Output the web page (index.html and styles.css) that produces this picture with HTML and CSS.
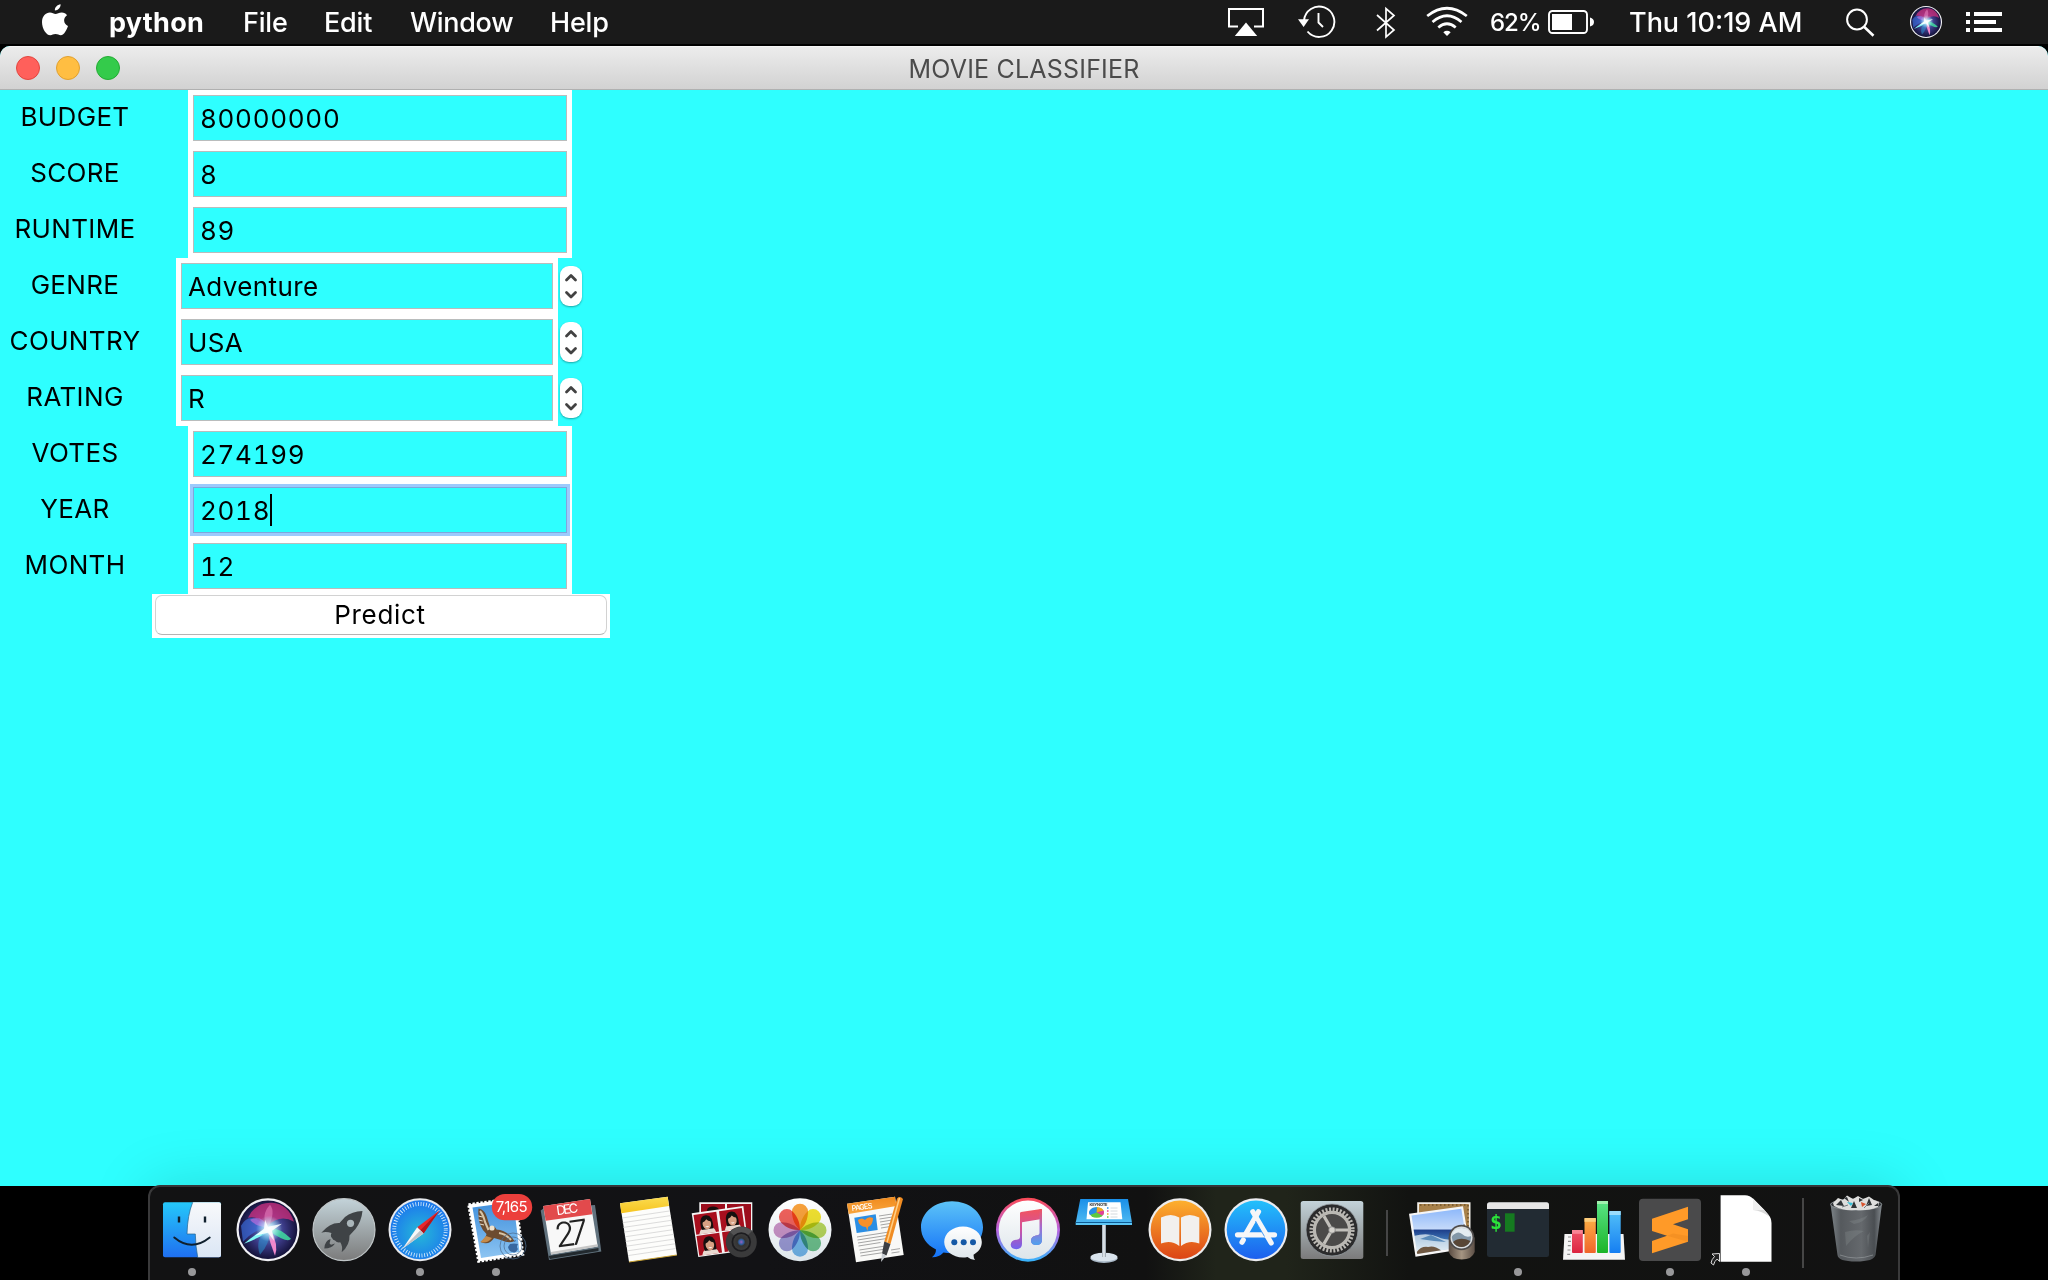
FILE: index.html
```html
<!DOCTYPE html>
<html lang="en">
<head>
<meta charset="utf-8">
<title>Movie Classifier</title>
<link rel="stylesheet" href="styles.css">
</head>
<body>
<svg class="defs" width="0" height="0" aria-hidden="true">
  <defs>
    <linearGradient id="gFinder" x1="0" y1="0" x2="0" y2="1"><stop offset="0" stop-color="#25c8fa"/><stop offset="1" stop-color="#1f6ff0"/></linearGradient>
    <linearGradient id="gFace" x1="0" y1="0" x2="0" y2="1"><stop offset="0" stop-color="#f8f9fb"/><stop offset="1" stop-color="#dbe6f5"/></linearGradient>
    <radialGradient id="gSiri" cx=".5" cy=".5" r=".5"><stop offset="0" stop-color="#6f9ae0"/><stop offset=".55" stop-color="#3b3a86"/><stop offset="1" stop-color="#14123a"/></radialGradient>
    <radialGradient id="gGlow" cx=".5" cy=".5" r=".5"><stop offset="0" stop-color="#fff"/><stop offset=".35" stop-color="#d4fbff" stop-opacity=".75"/><stop offset="1" stop-color="#a8e8ff" stop-opacity="0"/></radialGradient>
    <linearGradient id="gGrey" x1="0" y1="0" x2="0" y2="1"><stop offset="0" stop-color="#c3d3d9"/><stop offset="1" stop-color="#7b7b7b"/></linearGradient>
    <radialGradient id="gSafari" cx=".5" cy=".55" r=".5"><stop offset="0" stop-color="#25b9d8"/><stop offset="1" stop-color="#1d7bec"/></radialGradient>
    <linearGradient id="gSky" x1="0" y1="0" x2="0" y2="1"><stop offset="0" stop-color="#3f8fdc"/><stop offset="1" stop-color="#8cc4f2"/></linearGradient>
    <linearGradient id="gMsg" x1="0" y1="0" x2="0" y2="1"><stop offset="0" stop-color="#5cc3f7"/><stop offset="1" stop-color="#1573f8"/></linearGradient>
    <linearGradient id="gPale" x1="0" y1="0" x2="0" y2="1"><stop offset="0" stop-color="#ffffff"/><stop offset="1" stop-color="#dde5ea"/></linearGradient>
    <linearGradient id="gTunesRing" x1="0" y1="0" x2="0" y2="1"><stop offset="0" stop-color="#fb4a55"/><stop offset=".5" stop-color="#b964e0"/><stop offset="1" stop-color="#35b4fb"/></linearGradient>
    <linearGradient id="gTunesNote" x1="0" y1="0" x2="0" y2="1"><stop offset="0" stop-color="#f2545e"/><stop offset=".5" stop-color="#d052a0"/><stop offset="1" stop-color="#6f62f0"/></linearGradient>
    <linearGradient id="gTunesNote2" x1="0" y1="0" x2="0" y2="1"><stop offset="0" stop-color="#f2545e"/><stop offset=".5" stop-color="#a46ad0"/><stop offset="1" stop-color="#4ea3ee"/></linearGradient>
    <linearGradient id="gKey" x1="0" y1="0" x2="0" y2="1"><stop offset="0" stop-color="#1a8fe8"/><stop offset="1" stop-color="#4db9f2"/></linearGradient>
    <linearGradient id="gBooks" x1="0" y1="0" x2="0" y2="1"><stop offset="0" stop-color="#fdb02e"/><stop offset="1" stop-color="#dc4416"/></linearGradient>
    <linearGradient id="gStore" x1="0" y1="0" x2="0" y2="1"><stop offset="0" stop-color="#23c0fb"/><stop offset="1" stop-color="#1d5fee"/></linearGradient>
    <linearGradient id="gNotes" x1="0" y1="0" x2="0" y2="1"><stop offset="0" stop-color="#fbdc50"/><stop offset="1" stop-color="#f6c41f"/></linearGradient>
    <linearGradient id="gPages" x1="0" y1="0" x2="0" y2="1"><stop offset="0" stop-color="#f08a1c"/><stop offset="1" stop-color="#f9a53d"/></linearGradient>
    <linearGradient id="gSea" x1="0" y1="0" x2="0" y2="1"><stop offset="0" stop-color="#8db8fa"/><stop offset=".45" stop-color="#c5dafa"/><stop offset=".47" stop-color="#1d3f8a"/><stop offset=".7" stop-color="#3f78b8"/><stop offset="1" stop-color="#e4eef4"/></linearGradient>
    <linearGradient id="gTrash" x1="0" y1="0" x2="1" y2="0"><stop offset="0" stop-color="#7d8488"/><stop offset=".2" stop-color="#55595d"/><stop offset=".6" stop-color="#65696d"/><stop offset=".85" stop-color="#4a4e52"/><stop offset="1" stop-color="#858b90"/></linearGradient>
    <linearGradient id="gRed" x1="0" y1="0" x2="0" y2="1"><stop offset="0" stop-color="#f0566a"/><stop offset="1" stop-color="#dc2440"/></linearGradient>
    <linearGradient id="gOrange" x1="0" y1="0" x2="0" y2="1"><stop offset="0" stop-color="#fcb045"/><stop offset="1" stop-color="#f0652a"/></linearGradient>
    <linearGradient id="gGreen" x1="0" y1="0" x2="0" y2="1"><stop offset="0" stop-color="#5be488"/><stop offset="1" stop-color="#1bb428"/></linearGradient>
    <linearGradient id="gBlue" x1="0" y1="0" x2="0" y2="1"><stop offset="0" stop-color="#52c0f8"/><stop offset="1" stop-color="#157ef2"/></linearGradient>
    <linearGradient id="gLoupe" x1="0" y1="0" x2="1" y2="0"><stop offset="0" stop-color="#5a4c42"/><stop offset=".5" stop-color="#a59582"/><stop offset="1" stop-color="#5d5047"/></linearGradient>
    <linearGradient id="gMetal" x1="0" y1="0" x2="1" y2="0"><stop offset="0" stop-color="#9aa6b0"/><stop offset=".5" stop-color="#eef3f8"/><stop offset="1" stop-color="#8895a0"/></linearGradient>
    <radialGradient id="gLens" cx=".5" cy=".5" r=".5"><stop offset="0" stop-color="#9a60c0"/><stop offset=".3" stop-color="#2f5fa0"/><stop offset=".5" stop-color="#333"/><stop offset="1" stop-color="#3d3d3d"/></radialGradient>
    <g id="siri">
      <circle r="31.5" fill="#f0f0f4"/>
      <circle r="29.3" fill="url(#gSiri)"/>
      <path d="M-20-12Q-12-28 4-27Q20-26 26-8Q12-16 0-4Q-8-14-20-12z" fill="#d0307f" opacity=".75"/>
      <path d="M-27-4Q-18-20-2-3Q-16 2-25 12z" fill="#3a6fe0" opacity=".65"/>
      <path d="M0-2Q-14-4-18-10Q-6-16 0-2z" fill="#d070e0" opacity=".6"/>
      <path d="M0-2Q8-18 2-25Q-8-14 0-2z" fill="#f08bc8" opacity=".5"/>
      <path d="M2-3Q-10 2-24 14Q-8 8 4 0z" fill="#7ff8f4"/>
      <path d="M0-2Q12-2 23 9Q20 14 2 2z" fill="#3fdca0" opacity=".85"/>
      <path d="M-1 0Q2 14 7 26Q11 16 3 0z" fill="#f088cc"/>
      <path d="M0-2Q-14 10-8 25Q2 14 2 0z" fill="#2a9ad8" opacity=".5"/>
      <circle cx="1" cy="-1" r="13" fill="url(#gGlow)"/>
      <path d="M0-3L14-6L4 1L6 11L0 3L-13 6L-4-1L-3-10z" fill="#fff" opacity=".85"/>
    </g>
    <g id="portrait">
      <rect width="23" height="20" fill="#a80f1e"/>
      <path d="M3 20Q5 13 11.500 13Q19 13 20 20z" fill="#e9d9d0"/>
      <path d="M6 16Q4 2 12 2Q19 2 18 16z" fill="#17100f"/>
      <ellipse cx="12" cy="10.500" rx="4.300" ry="5.500" fill="#d9a184"/>
      <path d="M7 9Q8 3 12 4Q16 3 17 9Q13 8 12 6Q11 8 7 9z" fill="#17100f"/>
      <path d="M10 13Q12 15 14 13z" fill="#fff"/>
    </g>
    <path id="petal" d="M0 0C-5-5-8-11-8-18.500A8 8 0 0 1 8-18.500C8-11 5-5 0 0z"/>
  </defs>
</svg>

<header class="menubar">
  <svg class="apple" width="26" height="44" viewBox="0 0 26 44"><path fill="#fff" d="M18.600 4.200c.200 3-2.300 6.200-5.700 6.300C12.500 7.500 15.400 4.500 18.600 4.200zM25 15.200c-4.200 2.600-3.700 8.800 1 10.700-1 3.100-3.900 9.400-7.200 9.400-2 0-2.900-1.200-5.300-1.200s-3.300 1.200-5.200 1.200C4.300 35.300 0 28.500 0 22.200c0-6 3.900-9.600 7.900-9.600 2.400 0 4 1.400 5.700 1.400 1.600 0 3.300-1.500 6.200-1.500 2.200 0 4.100 1.100 5.200 2.700z"/></svg>
  <nav class="menus">
    <span class="menu menu-app">python</span>
    <span class="menu menu-file">File</span>
    <span class="menu menu-edit">Edit</span>
    <span class="menu menu-window">Window</span>
    <span class="menu menu-help">Help</span>
  </nav>
  <div class="status">
    <svg class="st-airplay" width="36" height="44"><path d="M10 26.500H1V9H35V26.500H26" fill="none" stroke="#fff" stroke-width="2"/><path d="M18 22.500L29.200 36H6.800z" fill="#fff"/></svg>
    <svg class="st-tm" width="38" height="44"><path d="M6 20.500A15.200 15.200 0 1 1 9.500 31.500" fill="none" stroke="#fff" stroke-width="1.900"/><path d="M0 19.300H11L5.600 27z" fill="#fff"/><path d="M20.500 13V22.500L25 27" fill="none" stroke="#fff" stroke-width="1.900"/></svg>
    <svg class="st-bt" width="20" height="44"><path d="M1 15L18 30L10 37V8.500L18 15.500L1 30.500" fill="none" stroke="#fff" stroke-width="1.700"/></svg>
    <svg class="st-wifi" width="42" height="44"><g fill="none" stroke="#fff" stroke-width="2.700"><path d="M1.200 16Q21 .500 40.800 16"/><path d="M6.500 22Q21 9.500 35.500 22"/><path d="M12.300 27.500Q21 20 29.700 27.500"/></g><path d="M17.300 32.200Q21 29.500 24.700 32.200L21 36z" fill="#fff"/></svg>
    <span class="percent">62%</span>
    <svg class="st-batt" width="46" height="44"><rect x="1" y="11" width="38" height="22" rx="3.500" fill="none" stroke="#fff" stroke-width="1.900"/><rect x="4" y="14" width="20" height="16" fill="#fff"/><path d="M42 17.500Q46 18.500 46 22T42 26.500z" fill="#fff"/></svg>
    <span class="clock">Thu 10:19 AM</span>
    <svg class="st-search" width="30" height="44"><circle cx="11" cy="19.500" r="9.900" fill="none" stroke="#fff" stroke-width="2"/><path d="M17.800 26.500L27.500 35.800" stroke="#fff" stroke-width="2.600"/></svg>
    <svg class="st-siri" width="32" height="44"><use href="#siri" transform="translate(16 22) scale(.508)"/></svg>
    <svg class="st-list" width="36" height="44" fill="#fff"><path d="M0 12h4v4H0zM8 12h28v4H8zM0 20h4v4H0zM8 20h22v4H8zM0 28h4v4H0zM8 28h28v4H8z"/></svg>
  </div>
</header>

<main class="window">
  <div class="titlebar">
    <div class="lights"><i class="light red"></i><i class="light amber"></i><i class="light green"></i></div>
    <h1 class="title">MOVIE CLASSIFIER</h1>
  </div>
  <div class="form">
    <div class="row"><label class="label">BUDGET</label><div class="entry"><div class="field num">80000000</div></div></div>
    <div class="row"><label class="label">SCORE</label><div class="entry"><div class="field num">8</div></div></div>
    <div class="row"><label class="label">RUNTIME</label><div class="entry"><div class="field num">89</div></div></div>
    <div class="row"><label class="label">GENRE</label><div class="entry combo"><div class="field">Adventure</div></div><div class="stepper"><svg width="22" height="40"><path d="M6.500 14L11 9.500L15.500 14M6.500 26.500L11 31L15.500 26.500"/></svg></div></div>
    <div class="row"><label class="label">COUNTRY</label><div class="entry combo"><div class="field">USA</div></div><div class="stepper"><svg width="22" height="40"><path d="M6.500 14L11 9.500L15.500 14M6.500 26.500L11 31L15.500 26.500"/></svg></div></div>
    <div class="row"><label class="label">RATING</label><div class="entry combo"><div class="field">R</div></div><div class="stepper"><svg width="22" height="40"><path d="M6.500 14L11 9.500L15.500 14M6.500 26.500L11 31L15.500 26.500"/></svg></div></div>
    <div class="row"><label class="label">VOTES</label><div class="entry"><div class="field num">274199</div></div></div>
    <div class="row"><label class="label">YEAR</label><div class="entry"><div class="field num focused">2018<i class="caret"></i></div></div></div>
    <div class="row"><label class="label">MONTH</label><div class="entry"><div class="field num">12</div></div></div>
    <div class="action"><button class="predict">Predict</button></div>
  </div>
</main>

<footer class="shelf">
  <div class="dock">
    <svg class="app" viewBox="0 0 76 94">
      <rect x="9" y="16.300" width="58" height="55" rx="2" fill="url(#gFinder)"/>
      <path d="M38.700 16.300H65q2 0 2 2V69.300q0 2-2 2H43.700Q41.500 60 41.300 48H33Q33.500 29 38.700 16.300z" fill="url(#gFace)"/>
      <path d="M38.700 16.300Q33.500 29 33 48H41.300Q41.500 60 43.700 71.300" fill="none" stroke="#24648f" stroke-width=".7"/>
      <path d="M25 30.500V36.500M51 30.500V36.500" stroke="#10202e" stroke-width="2.400"/><path d="M20.300 51.500Q37.500 66 55.700 51.500" fill="none" stroke="#10202e" stroke-width="2" stroke-linecap="round"/>
      <circle class="dot" cx="38" cy="86" r="4"/>
    </svg>
    <svg class="app" viewBox="0 0 76 94"><use href="#siri" x="38" y="43.700"/></svg>
    <svg class="app" viewBox="0 0 76 94">
      <circle cx="38" cy="43.700" r="31" fill="url(#gGrey)" stroke="#c0c6c8" stroke-width="1.200"/>
      <path fill="#3f4346" d="M56.500 25Q46 25.500 39 31L33.500 37Q24 36.500 15.300 46.700Q20 45 25.500 47Q24 50 26 52Q27 54 29 54.500Q31 57 34.200 56.300Q37 60 35.700 66.300Q44 59 43.500 49.500L49.500 43Q55.500 35 56.500 25zM24.500 53Q18.500 55 18.300 62.500Q26 62.500 29 57.500L26 58.500Q25 59 24 58Q23 57 24 56z"/>
      <circle cx="44.500" cy="37.300" r="3.600" fill="#aab6ba"/>
    </svg>
    <svg class="app" viewBox="0 0 76 94">
      <circle cx="38" cy="43.700" r="31.500" fill="#e8eaee"/><circle cx="38" cy="43.700" r="29.500" fill="url(#gSafari)"/>
      <circle cx="38" cy="43.700" r="25.800" fill="none" stroke="#e2f2fc" stroke-width="4" stroke-dasharray=".8 1.900"/>
      <path d="M57.500 24.500L35.200 41.200L41.500 47.500z" fill="#e8262a"/><path d="M57.500 24.500L38.400 44.300L41.500 47.500z" fill="#b5161b"/>
      <path d="M20.500 62.800L35.200 41.200L41.500 47.500z" fill="#f7f7f7"/><path d="M20.500 62.800L38.400 44.300L41.500 47.500z" fill="#bfc4c9"/>
      <circle class="dot" cx="38" cy="86" r="4"/>
    </svg>
    <svg class="app" viewBox="0 0 76 94">
      <path d="M10.500 18.500L57.500 12L65 68.500L20.500 75.500z" fill="#fff" stroke="#fff" stroke-width="2.600" stroke-dasharray="2.400 1.600"/>
      <path d="M14.500 21.500L55.500 16L61.500 66L23 72z" fill="url(#gSky)"/>
      <path d="M20.500 22.500Q26 23 28.500 30L32 41Q36 38 38.500 43.500Q49 44 56.500 55Q51 58 43 54L36 52Q31 60 22.500 56Q28 52 28.500 48Q19 40 20.500 22.500z" fill="#6d4c30"/>
      <path d="M22 25Q25.500 29 27 36L30.500 44M41 47Q48 48 53 54" stroke="#d6c4a6" stroke-width="2" fill="none"/><path d="M20.500 30l4 1M20.700 34l4 1M22 38l4 1" stroke="#e6dcc8" stroke-width="1"/><circle cx="34" cy="42" r="2.600" fill="#f0e4cf"/><path d="M28 50L22.500 56Q29 58 34 52z" fill="#c58b4b"/>
      <g fill="none" stroke="#4d6d8f" stroke-width=".9" opacity=".8"><circle cx="55" cy="60" r="13"/><circle cx="55" cy="60" r="9"/></g><path d="M55.500 56q1-2 2.500-2q0 2-2.500 2zM52 58q4-1 8 0q-2 3 0 5q-3 5-5 3q-4 0-5-5z" fill="#3767a0"/>
      <rect x="33.800" y="8" width="40.400" height="26.300" rx="13.100" fill="#ec3f3c"/><text class="badge-text" x="37.700" y="26.300" textLength="32">7,165</text>
      <circle class="dot" cx="38" cy="86" r="4"/>
    </svg>
    <svg class="app" viewBox="0 0 76 94">
      <path d="M6.700 24.500L10 22L61 19L67.300 65.500L15 74z" fill="#61727e"/><path d="M14.500 70L64.500 62V65L16 73z" fill="#22292e"/>
      <path d="M9.300 20L56 13L63.700 60.500L17 68.500z" fill="#f8f8f8"/><path d="M9.300 20L56 13L58.300 28.300L11.700 34.700z" fill="#e24a4c"/>
      <path d="M17 66L63.300 58.200L63.700 60.500L17 68.500z" fill="#c6c6c6"/>
      <text class="cal-month" transform="translate(33.800 27.700) rotate(-8)" textLength="22" text-anchor="middle">DEC</text>
      <text class="cal-day" transform="translate(39 59.300) rotate(-8)" textLength="34" text-anchor="middle">27</text>
    </svg>
    <svg class="app" viewBox="0 0 76 94">
      <path d="M10 17.300L57.700 10.700L67 69L19 76z" fill="#fdfdfb"/><path d="M10 17.300L57.700 10.700L59 20L11.300 27.300z" fill="url(#gNotes)"/>
      <path d="M19 76L67 69" stroke="#c9a233" stroke-width="1"/>
      <path d="M12 32l48-7.100M12.700 36.700l48-7.100M13.400 41.400l48-7.100M14.200 46.100l48-7.100M14.900 50.800l48-7.100M15.700 55.500l48-7.100M16.400 60.200l48-7.100M17.100 64.900l48-7.100M17.900 69.600l48-7.100" stroke="#d3d3d3" stroke-width=".8"/>
    </svg>
    <svg class="app" viewBox="0 0 76 94">
      <path d="M13.300 16.300H66.300V50H13.300z" fill="#f4f4f4"/><path d="M15 18H39V40H15zM41 18H65V48H41z" fill="#9c0d1c"/><ellipse cx="27" cy="24" rx="6" ry="3.500" fill="#1a0d0c"/>
      <path d="M5.700 27.300L57.300 20L63 64L12.300 71z" fill="#f4f4f4"/>
      <use href="#portrait" transform="translate(7.500 29) rotate(-8)"/><use href="#portrait" transform="translate(33 25.300) rotate(-8)"/>
      <use href="#portrait" transform="translate(10.500 50) rotate(-8)"/><use href="#portrait" transform="translate(36 46.300) rotate(-8)"/>
      <circle cx="55.300" cy="56" r="15.500" fill="#3a3a3b"/><path d="M44 46A15.500 15.500 0 0 1 66 45L55 56z" fill="#525253"/><circle cx="55.300" cy="56" r="9.800" fill="#1c1c1f"/><circle cx="55.300" cy="56" r="8" fill="url(#gLens)"/>
    </svg>
    <svg class="app" viewBox="0 0 76 94">
      <circle cx="38" cy="43.700" r="31.500" fill="url(#gPale)"/>
      <g class="petals" transform="translate(38 44.200)">
        <use href="#petal" fill="#f9a23c"/><use href="#petal" fill="#f2e230" transform="rotate(45)"/><use href="#petal" fill="#b9d65c" transform="rotate(90)"/><use href="#petal" fill="#70c28c" transform="rotate(135)"/><use href="#petal" fill="#76b8ea" transform="rotate(180)"/><use href="#petal" fill="#9f9bd4" transform="rotate(225)"/><use href="#petal" fill="#cd94c6" transform="rotate(270)"/><use href="#petal" fill="#f2625c" transform="rotate(315)"/>
      </g>
    </svg>
    <svg class="app" viewBox="0 0 76 94">
      <path d="M9 17.700L57 10.700L65.700 69L18 76.300z" fill="#f9f9f7"/><path d="M9 17.700L57 10.700L58.300 20L10.700 28z" fill="url(#gPages)"/>
      <text class="pages-text" transform="translate(14 25) rotate(-8)" textLength="21">PAGES</text>
      <path d="M16.300 31.700L37.700 28.300L39.700 44L18.700 47z" fill="#2a8ee4"/><path d="M20 34Q24 31 27 34Q30 30 35 32Q35 39 30 41L29.500 45L28 41Q21 41 20 34z" fill="#f7902a"/>
      <path d="M41 30l13-2M41.500 33l13-2M42 36l12-2M42.500 39l10-1.600M43 42l10-1.600M19 51l32-5M19.500 54l30-4.700M20 57l30-4.700M20.500 60l22-3.500M21.500 64l26-4M22 67l25-3.900M22.500 70l22-3.300M53 64l9-1.400M53.500 67l8-1.200" stroke="#9b9b9b" stroke-width=".9"/>
      <path d="M59 12.500Q62 9.500 65 13L52.500 58L46.300 55.500z" fill="#f08c22"/><path d="M61.500 12L49 56.500" stroke="#ffd087" stroke-width="1.500"/><path d="M46.300 55.500L52.500 58L48.500 69.500L44 67.500z" fill="#3d3f43"/><path d="M44 67.500L48.300 69.500L43 76z" fill="#c9ced3"/>
    </svg>
    <svg class="app" viewBox="0 0 76 94">
      <path d="M38 15.300C55 15.300 69 26.500 69 41.300S55 67.300 38 67.300Q33 67.300 29.500 66.500Q25 71.500 18 71.300Q22 68 22 63.500C12.500 59 7 51 7 41.300C7 26.500 21 15.300 38 15.300z" fill="url(#gMsg)"/>
      <path d="M49 40.500C59.500 40.500 67.800 47.500 67.800 56C67.800 61.500 64.500 66 59.500 68.700Q59.500 72 61 74Q56 73.500 53.500 71Q51 71.500 49 71.500C38.500 71.500 30.200 64.500 30.200 56S38.500 40.500 49 40.500z" fill="url(#gPale)"/>
      <g fill="#1458a6"><circle cx="40.300" cy="56.200" r="3"/><circle cx="49.700" cy="56.200" r="3"/><circle cx="59" cy="56.200" r="3"/></g>
    </svg>
    <svg class="app" viewBox="0 0 76 94">
      <circle cx="38" cy="43.700" r="32" fill="url(#gTunesRing)"/><circle cx="38" cy="43.700" r="29.300" fill="url(#gPale)"/>
      <path d="M30 27.500Q30 26.300 31 26L51 23Q52 23 52 24V54Q52 59 46.500 59Q41 59 41 54.500Q41 50.500 46 49.500Q50 49 50 47V33.300L32 36.300V58Q32 63 26.300 63.300Q20.500 63 20.700 58.500Q21 54.500 26 53.800Q30 53.500 30 51z" fill="url(#gTunesNote)"/>
      <path d="M49.500 23.200L51 23Q52 23 52 24V54Q52 59 46.500 59Q41 59 41 54.500Q41 50.500 46 49.500Q49.500 49 49.500 47z" fill="url(#gTunesNote2)"/>
    </svg>
    <svg class="app" viewBox="0 0 76 94">
      <ellipse cx="38" cy="72.300" rx="13.500" ry="4.700" fill="#a9b8c6"/><ellipse cx="38" cy="71" rx="13.500" ry="4.300" fill="#d9e3ec"/><path d="M36 39H40V71H36z" fill="url(#gMetal)"/>
      <path d="M14.300 13H62L66 36.700H9.700z" fill="url(#gKey)"/><path d="M9.700 36.700H66V39H9.700z" fill="#5bc6f6"/><path d="M9.700 36.500H66" stroke="#0e5b94" stroke-width="1"/>
      <path d="M22 16.300H54.500L56.300 33.300H20.500z" fill="#fff"/><text class="key-text" x="23.500" y="20.300" textLength="18">KEYNOTE</text>
      <ellipse cx="30.700" cy="26.500" rx="7.300" ry="5.200" fill="#5fc83f"/><path d="M30.700 26.500L24 29A7.300 5.200 0 0 1 31 21.300z" fill="#278ee8"/><path d="M30.700 26.500L31 21.300A7.300 5.200 0 0 1 37.500 24.500z" fill="#f5a623"/><path d="M30.700 26.500L37.500 24.500Q39 27 36.500 29.500z" fill="#e4409a"/>
      <path d="M41 22h1.500" stroke="#278ee8" stroke-width="1.500"/><path d="M41 25h1.500" stroke="#e4409a" stroke-width="1.500"/><path d="M41 28h1.500" stroke="#f5a623" stroke-width="1.500"/><path d="M41 31h1.500" stroke="#5fc83f" stroke-width="1.500"/><path d="M44.500 22h7M44.500 25h7M44.500 28h7M44.500 31h7" stroke="#c9d0d6" stroke-width=".8"/>
    </svg>
    <svg class="app" viewBox="0 0 76 94">
      <circle cx="38" cy="43.700" r="31.500" fill="#ececec"/><circle cx="38" cy="43.700" r="29.300" fill="url(#gBooks)"/>
      <path d="M19 31.500Q29 26.500 37.300 31.500V60Q29 53.500 19 57.500zM57.300 31.500Q47.300 26.500 39 31.500V60Q47.300 53.500 57.300 57.500z" fill="#f2f0ee"/>
    </svg>
    <svg class="app" viewBox="0 0 76 94">
      <circle cx="38" cy="43.700" r="31.500" fill="#ececf0"/><circle cx="38" cy="43.700" r="29.300" fill="url(#gStore)"/>
      <g stroke="#f6f6f8" stroke-width="5.200" stroke-linecap="round"><path d="M19.500 48.800H56.500"/><path d="M40.500 25.800L28 47.500"/><path d="M34.800 25.800L53.200 57"/><path d="M25.300 54L24 56.300"/></g>
      <path d="M41.500 33L50.500 48.500" stroke="#1f86f4" stroke-width=".8" transform="translate(-4 2)"/>
    </svg>
    <svg class="app" viewBox="0 0 76 94">
      <rect x="6.700" y="15" width="62.600" height="58" rx="2.500" fill="url(#gGrey)"/><circle cx="38" cy="44" r="26" fill="#2b2b2c" stroke="#98a0a4" stroke-width=".8"/>
      <circle cx="38" cy="44" r="20.500" fill="none" stroke="#b9b7b2" stroke-width="4.200" stroke-dasharray="2 1.578"/><circle cx="38" cy="44" r="17.600" fill="#4b4a49" stroke="#bab8b3" stroke-width="3.200"/>
      <g stroke="#c2c0bb" stroke-width="3.200"><path d="M38 44H54M38 44L30 30.200M38 44L30 57.800"/></g><circle cx="38" cy="44" r="3.300" fill="#d4d2cd" stroke="#777" stroke-width=".7"/>
    </svg>
    <i class="divider short"></i>
    <svg class="app" viewBox="0 0 76 94">
      <path d="M13.200 16.300H66.500V52H13.200z" fill="#f2efe9"/><path d="M15 18H64.800V50H15z" fill="#a8814a"/><path d="M16 19H64V49" stroke="#6f5228" stroke-width="1.500" stroke-dasharray="1.500 2.500" fill="none"/>
      <path d="M5 27.700L59 20.300L66 62L11.500 70.700z" fill="#f6f6f6"/><path d="M7.500 29.500L57.300 22.700L63.500 60L13.300 68z" fill="url(#gSea)"/>
      <path d="M9.500 50Q24 46 34 51T62 52L63.500 60L13.300 68z" fill="#e8f1f6" opacity=".75"/><path d="M12.800 66Q17 60 24 61Q30 59 37 64.300L13.300 68z" fill="#6f5842"/><path d="M16 53L27 49L42 56L30 55z" fill="#2f6ca6" opacity=".7"/><path d="M56 41L60.500 38V46z" fill="#4c3a30"/>
      <path d="M44.700 51.500H70.700V66Q68 73.500 57.700 73.500T44.700 66z" fill="url(#gLoupe)"/><circle cx="57.500" cy="51.500" r="12.800" fill="#4f4c4b"/><circle cx="57.500" cy="51.500" r="11" fill="#d9dde0"/><circle cx="57.500" cy="51.500" r="9.600" fill="#8397a8"/><path d="M48 50Q54 44 58 48T67 50Q66 42 57.500 42T48 50z" fill="#e4ecf1"/><path d="M49 56Q56 50 66.500 55Q63 61 57.500 61T49 56z" fill="#584636"/>
    </svg>
    <svg class="app" viewBox="0 0 76 94">
      <rect x="7" y="16.300" width="62" height="54.700" rx="2.500" fill="#222b33"/><path d="M7 23V18.800q0-2.500 2.500-2.500H66.500q2.500 0 2.500 2.500V23z" fill="#e6e6e6"/>
      <text class="prompt" x="10" y="43">$</text><path d="M25 27.300H34.600V45.700H25z" fill="#157a20"/>
      <circle class="dot" cx="38" cy="86" r="4"/>
    </svg>
    <svg class="app" viewBox="0 0 76 94">
      <path d="M8.500 48H67.500L69 73.700H7z" fill="#f5f5f5"/><path d="M12 51h3M12 55.300h3M11.800 59.700h3M11.500 64h3M11.200 68.300h3" stroke="#909090" stroke-width="1.200"/>
      <rect x="16" y="44" width="10.800" height="23" rx="1" fill="url(#gRed)"/><path d="M16 44h10.800v3.800H16z" fill="#f88594"/>
      <rect x="28.500" y="32" width="11.300" height="35" rx="1" fill="url(#gOrange)"/><path d="M28.500 32h11.300v3.800H28.500z" fill="#fdcd7c"/>
      <rect x="41" y="15" width="11" height="52" rx="1" fill="url(#gGreen)"/><path d="M41 15h11v3H41z" fill="#a0f0ae"/>
      <rect x="53.400" y="25" width="11.300" height="42" rx="1" fill="url(#gBlue)"/><path d="M53.400 25h11.300v4H53.400z" fill="#9bdcfb"/>
    </svg>
    <svg class="app" viewBox="0 0 76 94">
      <rect x="7" y="12.700" width="62" height="62.300" rx="4" fill="#4a4a4b"/>
      <path d="M56 20.700L20 32.700V45L35 49.700L20 55V67.300L56 55.700V43.300L41 38.300L56 33.300z" fill="#ff9a28"/><path d="M35 49.700L56 55.700V50L41 47.500z" fill="#e6851c" opacity=".4"/>
      <circle class="dot" cx="38" cy="86" r="4"/>
    </svg>
    <svg class="app" viewBox="0 0 76 94">
      <path d="M12.600 9.200H37Q42 9.200 45.500 13L59 27Q63.500 31.500 63.500 37V75.700H12.600z" fill="#fff"/><path d="M45 12.500V24H56.500z" fill="#f0f0f0"/><path d="M45 24H56.500L62 31Q54 25 45 24z" fill="#dadada"/>
      <path d="M4 68L11.500 67.500V75.500L9.200 73Q6.500 75 5.500 79L3 77Q3.500 73.500 6.500 70.500z" fill="#222" stroke="#dcdcdc" stroke-width="1"/>
      <circle class="dot" cx="38" cy="86" r="4"/>
    </svg>
    <i class="divider long"></i>
    <svg class="app" viewBox="0 0 76 94">
      <path d="M12.400 17.500H64L57.500 69Q56 75.500 38 75.500T19.500 69z" fill="url(#gTrash)"/><ellipse cx="38.200" cy="18.500" rx="25.500" ry="5.500" fill="#303336" stroke="#8c9296" stroke-width="1"/>
      <path d="M15 17L20 12L25 14L29 9.500L35 13L40 10L45 13L51 10.500L56 14L61 16L60 21Q50 25 38 24Q24 25 16 20z" fill="#dededd"/>
      <path d="M18 19l5-5l3 6zM33 22l3-7l3 7zM51 12l3 7l-6 1zM26 12l3-1l2 5zM56 20l4-3v3zM41 12l4 2l-4 2z" fill="#303437"/><path d="M24 21l6-2M46 22l5-5" stroke="#777c80" stroke-width="1" fill="none"/><path d="M29 16l6 1l-2 3z" fill="#35bfd5"/><path d="M43 16l5 2l-4 3z" fill="#d9542e"/>
      <path d="M31 35Q42 34 50 29Q47 36 36 38zM27 46Q37 43 46 45Q36 50 28 60zM49 50Q52 47 52 45L50 62z" fill="#9ca2a6" opacity=".22"/><path d="M22 69Q38 75 55 69" stroke="#9ba0a4" stroke-width="1" fill="none" opacity=".6"/>
    </svg>
  </div>
</footer>
</body>
</html>
```
FILE: styles.css
```css
* { box-sizing: border-box; }

body {
  margin: 0;
  width: 2048px;
  height: 1280px;
  overflow: hidden;
  display: flex;
  flex-direction: column;
  background: #000;
  font-family: Inter, "Liberation Sans", sans-serif;
  color: #000;
}

svg { display: block; flex: none; }
.defs { position: absolute; }

/* Menu bar */
.menubar {
  flex: none;
  height: 44px;
  margin-bottom: 2px;
  display: flex;
  background: #1a1a1a;
  color: #fff;
  font-size: 27px;
  font-weight: 500;
  line-height: 45px;
  letter-spacing: -0.2px;
  white-space: nowrap;
}
.apple { margin-left: 42px; }
.menus { display: flex; margin-left: 41px; }
.menu-app { width: 134px; font-weight: 700; letter-spacing: 0.3px; }
.menu-file { width: 81px; }
.menu-edit { width: 86px; }
.menu-window { width: 140px; letter-spacing: -0.3px; }
.status { display: flex; margin-left: auto; padding-right: 46px; }
.st-airplay { margin-right: 34px; }
.st-tm { margin-right: 40px; }
.st-bt { margin-right: 30px; }
.st-wifi { margin-right: 22px; }
.percent { width: 58px; font-size: 24px; letter-spacing: -1.1px; }
.st-batt { margin-right: 35px; }
.clock { width: 217px; letter-spacing: 0; }
.st-search { margin-right: 34px; }
.st-siri { margin-right: 24px; }

/* Application window */
.window {
  flex: none;
  height: 1140px;
  border-radius: 10px 10px 0 0;
  overflow: hidden;
  background: #2effff;
}
.titlebar {
  height: 44px;
  display: grid;
  grid-template-columns: 1fr auto 1fr;
  align-items: center;
  padding-left: 16px;
  padding-right: 16px;
  background: linear-gradient(#ececec, #d2d2d2);
  border-top: 1px solid #f6f6f6;
  border-bottom: 1px solid #b0b0b0;
}
.lights { display: flex; gap: 16px; }
.light { width: 24px; height: 24px; border-radius: 50%; border: 1px solid; }
.red { background: #ff605b; border-color: #e2463f; }
.amber { background: #ffbe42; border-color: #e0a030; }
.green { background: #34cb4b; border-color: #24ac34; }
.title {
  margin: 0;
  padding-top: 2px;
  font-size: 25px;
  font-weight: 400;
  letter-spacing: 0.2px;
  color: #4b4b4b;
}

/* Form */
.row { display: flex; height: 56px; }
.label {
  width: 150px;
  margin-right: 38px;
  text-align: center;
  font-size: 26px;
  line-height: 53px;
  letter-spacing: 0.35px;
}
.entry {
  width: 384px;
  padding: 5px;
  background: #fff;
}
.field {
  height: 46px;
  padding-left: 6px;
  display: flex;
  align-items: center;
  background: #2effff;
  border: 1px solid #b9bcbc;
  font-size: 26px;
  line-height: 46px;
  letter-spacing: 0.4px;
  padding-top: 2px;
}
.num { letter-spacing: 0.7px; font-variant-numeric: tabular-nums; }
.focused { border-color: #7fa6dc; box-shadow: 0 0 0 3px #9ccafc; }
.caret { width: 2px; height: 32px; margin-top: -2px; background: #000; }
.combo { width: 382px; margin-left: -12px; }
.stepper {
  width: 22px;
  height: 40px;
  margin: 8px 0 0 2px;
  border-radius: 9px;
  background: #fff;
  box-shadow: 0 1px 2px rgba(0, 60, 60, 0.45);
}
.stepper path { fill: none; stroke: #424242; stroke-width: 2.8; stroke-linecap: round; stroke-linejoin: round; }
.action {
  width: 458px;
  height: 44px;
  margin-left: 152px;
  padding: 1px 3px 3px;
  background: #fff;
}
.predict {
  display: block;
  width: 100%;
  height: 40px;
  padding: 0 2px 0 0;
  border: 1px solid #d2d2d2;
  border-bottom-color: #b4b4b4;
  border-radius: 7px;
  background: #fff;
  color: #000;
  font: 400 26px/38px Inter, "Liberation Sans", sans-serif;
  letter-spacing: 0.7px;
}

/* Dock */
.shelf { flex: none; height: 95px; margin-top: -1px; display: flex; padding-left: 148px; }
.dock {
  position: relative;
  width: 1752px;
  height: 95px;
  display: flex;
  padding: 0 4px;
  border: 2px solid #3a3a3b;
  border-top-color: #343638;
  border-bottom: 0;
  border-radius: 12px 12px 0 0;
  background: linear-gradient(90deg, #121213 0, #121215 35%, #111 57%, #20241a 61%, #20241a 65%, #121311 72%, #121212 100%);
  box-shadow: 0 0 60px rgba(0, 0, 0, 0.15);
}
.app { width: 76px; height: 94px; margin-top: -1px; overflow: visible; }
.dot { fill: #98989a; }
.divider { flex: none; width: 2px; background: #464646; }
.short { height: 46px; margin: 23px 16px 0; }
.long { height: 70px; margin: 11px 14px 0 18px; }
.petals use { mix-blend-mode: multiply; }
.badge-text { font-size: 15px; fill: #fff; }
.cal-month { font-size: 13px; fill: #fff; }
.cal-day { font-size: 34px; font-weight: 300; fill: #222; }
.pages-text { font-size: 7.5px; font-weight: 500; fill: #fff; }
.key-text { font-size: 4px; font-weight: 700; fill: #333; }
.prompt { font: 700 20px "DejaVu Sans Mono", monospace; fill: #2be33a; }
```
